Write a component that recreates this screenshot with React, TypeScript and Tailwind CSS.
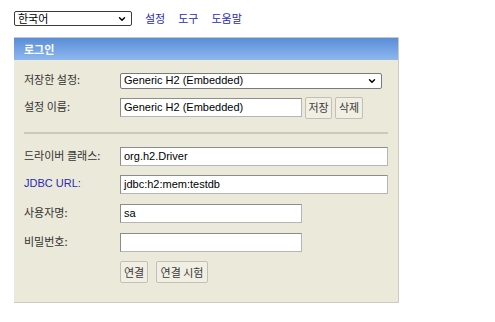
import { ChevronDown } from "lucide-react";

const ko = "font-['Noto_Sans_CJK_KR','Liberation_Sans',sans-serif]";
const sans = "font-['Liberation_Sans','Noto_Sans_CJK_KR',sans-serif]";

function FakeSelect({ value, className }: { value: string; className: string }) {
  return (
    <div
      className={`flex items-center justify-between bg-white border rounded-[2px] pl-[3px] pr-[4px] text-[11px] leading-none text-black ${className}`}
    >
      <span className="leading-none">{value}</span>
      <ChevronDown size={10} strokeWidth={3.5} className="text-black" />
    </div>
  );
}

function Field({ value, w }: { value?: string; w: string }) {
  return (
    <div
      className={`h-[19px] ${w} bg-white border border-[#8c8c8c] border-r-[#b5b5b5] border-b-[#b5b5b5] flex items-center px-[3px] text-[11px] leading-none text-black ${sans}`}
    >
      {value}
    </div>
  );
}

function Btn({ children, w }: { children: string; w: string }) {
  return (
    <button
      className={`h-[22px] ${w} bg-[#f1efe4] border border-[#c2c0b4] rounded-[2px] text-[11px] leading-none text-[#3a3a3a] flex items-center justify-center ${ko}`}
    >
      {children}
    </button>
  );
}

function Row({ label, blue, children, mt }: { label: string; blue?: boolean; children: React.ReactNode; mt: string }) {
  return (
    <div className={`flex items-center h-[19px] ${mt}`}>
      <div
        className={`w-[96px] text-[11px] leading-none pb-[2px] ${blue ? `text-[#2a2ab8] ${sans}` : `text-[#333] ${ko}`}`}
      >
        {label}
      </div>
      {children}
    </div>
  );
}

export default function App() {
  return (
    <div className={`w-[495px] h-[322px] bg-white pt-[11px] ${ko}`}>
      {/* top bar */}
      <div className="flex items-center h-[15px] pl-[14px]">
        <FakeSelect value="한국어" className={`w-[118px] h-[15px] border-[#3a3a3a] ${ko}`} />
        <div className="flex gap-[13px] ml-[13px] text-[11px] leading-none text-[#2a2ab8]">
          <span>설정</span>
          <span>도구</span>
          <span>도움말</span>
        </div>
      </div>

      {/* panel */}
      <div className="ml-[14px] mt-[11px] w-[385px] h-[266px] bg-[#ebe9d9] border-r border-b border-[#cdcbc0] border-t border-t-[#c6c6c6]">
        <div className="h-[22px] bg-gradient-to-b from-[#5a8dd7] to-[#8db8ee] flex items-center pl-[10px] text-[11px] leading-none text-white font-bold">
          로그인
        </div>

        <div className="pl-[10px]">
          <Row label="저장한 설정:" mt="mt-[11px]">
            <FakeSelect
              value="Generic H2 (Embedded)"
              className={`w-[262px] h-[16px] border-[#7a7a7a] ${sans}`}
            />
          </Row>
          <Row label="설정 이름:" mt="mt-[8px]">
            <Field value="Generic H2 (Embedded)" w="w-[182px]" />
            <div className="flex gap-[3px] ml-[3px]">
              <Btn w="w-[27px]">저장</Btn>
              <Btn w="w-[28px]">삭제</Btn>
            </div>
          </Row>

          <div className="mt-[15px] mr-[10px] h-[2px] bg-[#cbc9bb]" />

          <Row label="드라이버 클래스:" mt="mt-[13px]">
            <Field value="org.h2.Driver" w="w-[268px]" />
          </Row>
          <Row label="JDBC URL:" blue mt="mt-[9px]">
            <Field value="jdbc:h2:mem:testdb" w="w-[268px]" />
          </Row>
          <Row label="사용자명:" mt="mt-[10px]">
            <Field value="sa" w="w-[182px]" />
          </Row>
          <Row label="비밀번호:" mt="mt-[10px]">
            <Field w="w-[182px]" />
          </Row>
          <div className="flex gap-[8px] ml-[96px] mt-[9px]">
            <Btn w="w-[28px]">연결</Btn>
            <Btn w="w-[52px]">연결 시험</Btn>
          </div>
        </div>
      </div>
    </div>
  );
}
